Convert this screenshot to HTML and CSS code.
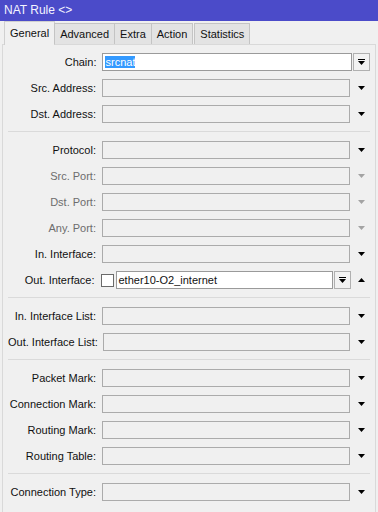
FILE: index.html
```
<html>
    <head>
        <link rel="stylesheet" href="styles.css">
    </head>
    <body>
        <div class="titlebar">NAT Rule &lt;&gt;</div>

        <div class="tabs">
            <span class="tab active">General</span>
            <span class="tab">Advanced</span>
            <span class="tab">Extra</span>
            <span class="tab">Action</span>
            <span class="tab">Statistics</span>
        </div>

        <div class="panel">
            <div class="group">
                <div class="row">
                    <span class="label">Chain:</span>
                    <div class="box white"><span class="sel">srcnat</span></div>
                    <span class="btn">
                        <svg width="7" height="6" viewBox="0 0 7 6"><rect x="0" y="0" width="7" height="1" fill="#000"/><path d="M0 2h7l-3.5 4z" fill="#000"/></svg>
                    </span>
                </div>
                <div class="row">
                    <span class="label">Src. Address:</span>
                    <div class="box"></div>
                    <span class="arrow"><svg width="7" height="4" viewBox="0 0 7 4"><path d="M0 0h7l-3.5 4z"/></svg></span>
                </div>
                <div class="row">
                    <span class="label">Dst. Address:</span>
                    <div class="box"></div>
                    <span class="arrow"><svg width="7" height="4" viewBox="0 0 7 4"><path d="M0 0h7l-3.5 4z"/></svg></span>
                </div>
            </div>

            <div class="group">
                <div class="row">
                    <span class="label">Protocol:</span>
                    <div class="box"></div>
                    <span class="arrow"><svg width="7" height="4" viewBox="0 0 7 4"><path d="M0 0h7l-3.5 4z"/></svg></span>
                </div>
                <div class="row off">
                    <span class="label">Src. Port:</span>
                    <div class="box"></div>
                    <span class="arrow"><svg width="7" height="4" viewBox="0 0 7 4"><path d="M0 0h7l-3.5 4z"/></svg></span>
                </div>
                <div class="row off">
                    <span class="label">Dst. Port:</span>
                    <div class="box"></div>
                    <span class="arrow"><svg width="7" height="4" viewBox="0 0 7 4"><path d="M0 0h7l-3.5 4z"/></svg></span>
                </div>
                <div class="row off">
                    <span class="label">Any. Port:</span>
                    <div class="box"></div>
                    <span class="arrow"><svg width="7" height="4" viewBox="0 0 7 4"><path d="M0 0h7l-3.5 4z"/></svg></span>
                </div>
                <div class="row">
                    <span class="label">In. Interface:</span>
                    <div class="box"></div>
                    <span class="arrow"><svg width="7" height="4" viewBox="0 0 7 4"><path d="M0 0h7l-3.5 4z"/></svg></span>
                </div>
                <div class="row">
                    <span class="label">Out. Interface:</span>
                    <div class="combo">
                        <span class="check"></span>
                        <div class="box white">ether10-O2_internet</div>
                        <span class="btn">
                            <svg width="7" height="6" viewBox="0 0 7 6"><rect x="0" y="0" width="7" height="1" fill="#000"/><path d="M0 2h7l-3.5 4z" fill="#000"/></svg>
                        </span>
                    </div>
                    <span class="arrow"><svg width="7" height="4" viewBox="0 0 7 4"><path d="M0 4h7l-3.5 -4z"/></svg></span>
                </div>
            </div>

            <div class="group">
                <div class="row">
                    <span class="label">In. Interface List:</span>
                    <div class="box"></div>
                    <span class="arrow"><svg width="7" height="4" viewBox="0 0 7 4"><path d="M0 0h7l-3.5 4z"/></svg></span>
                </div>
                <div class="row">
                    <span class="label">Out. Interface List:</span>
                    <div class="box"></div>
                    <span class="arrow"><svg width="7" height="4" viewBox="0 0 7 4"><path d="M0 0h7l-3.5 4z"/></svg></span>
                </div>
            </div>

            <div class="group">
                <div class="row">
                    <span class="label">Packet Mark:</span>
                    <div class="box"></div>
                    <span class="arrow"><svg width="7" height="4" viewBox="0 0 7 4"><path d="M0 0h7l-3.5 4z"/></svg></span>
                </div>
                <div class="row">
                    <span class="label">Connection Mark:</span>
                    <div class="box"></div>
                    <span class="arrow"><svg width="7" height="4" viewBox="0 0 7 4"><path d="M0 0h7l-3.5 4z"/></svg></span>
                </div>
                <div class="row">
                    <span class="label">Routing Mark:</span>
                    <div class="box"></div>
                    <span class="arrow"><svg width="7" height="4" viewBox="0 0 7 4"><path d="M0 0h7l-3.5 4z"/></svg></span>
                </div>
                <div class="row">
                    <span class="label">Routing Table:</span>
                    <div class="box"></div>
                    <span class="arrow"><svg width="7" height="4" viewBox="0 0 7 4"><path d="M0 0h7l-3.5 4z"/></svg></span>
                </div>
            </div>

            <div class="group">
                <div class="row">
                    <span class="label">Connection Type:</span>
                    <div class="box"></div>
                    <span class="arrow"><svg width="7" height="4" viewBox="0 0 7 4"><path d="M0 0h7l-3.5 4z"/></svg></span>
                </div>
            </div>
        </div>
    </body>
</html>
```

FILE: styles.css
```
body {
    margin: 0;
    width: 378px;
    height: 512px;
    overflow: hidden;
    background: #f0f0f0;
    font-family: "Liberation Sans", Arial, sans-serif;
    font-size: 11px;
    color: #111111;
}
.titlebar {
    height: 21px;
    line-height: 20px;
    padding: 0 0 0 4px;
    background: #4b4bc9;
    color: #f4f4ff;
    font-size: 12px;
}
.tabs {
    display: flex;
    align-items: flex-end;
    height: 23px;
    padding: 0 0 0 4px;
    position: relative;
    z-index: 1;
}
.tab {
    height: 20px;
    line-height: 20px;
    padding: 0 5px;
    margin: 0 0 0 -1px;
    background: #e3e3e3;
    border: 1px solid #c4c4c4;
    border-bottom: none;
}
.tab.active {
    height: 23px;
    line-height: 22px;
    margin: 0 0 -1px 0;
    background: #f0f0f0;
    border-color: #d0d0d0;
}
.tab:nth-child(5) {
    margin-left: 1px;
}
.panel {
    margin: 0 2px;
    padding: 8px 0 0 0;
    height: 480px;
    border: 1px solid #d9d9d9;
    border-bottom: none;
}
.group {
    display: flex;
    flex-direction: column;
    gap: 8px;
    margin: 0 5px 9px 5px;
    padding: 0 0 8px 0;
    border-bottom: 1px solid #dadada;
}
.group:last-child {
    border-bottom: none;
}
.row {
    display: flex;
    align-items: center;
    height: 18px;
}
.label {
    width: 89px;
    margin: 0 6px 0 0;
    text-align: right;
    white-space: nowrap;
}
.off .label {
    color: #6d6d6d;
}
.box {
    box-sizing: border-box;
    width: 251px;
    height: 18px;
    line-height: 16px;
    padding: 0 2px;
    border: 1px solid #ababab;
    background: #f0f0f0;
    white-space: nowrap;
}
.box.white {
    background: #ffffff;
    border-color: #9a9a9a;
}
.sel {
    background: #3399ff;
    color: #ffffff;
}
.btn {
    box-sizing: border-box;
    display: flex;
    align-items: center;
    justify-content: center;
    width: 17px;
    height: 18px;
    margin: 0 0 0 1px;
    border: 1px solid #b0b0b0;
    background: #f2f2f2;
}
.arrow {
    display: flex;
    justify-content: center;
    width: 18px;
    margin: 0 0 0 2px;
}
.arrow path {
    fill: #000000;
}
.off .arrow path {
    fill: #a3a3a3;
}
.combo {
    display: flex;
    align-items: center;
    width: 251px;
}
.combo .box {
    width: 217px;
    margin: 0 0 0 2px;
}
.check {
    box-sizing: border-box;
    width: 13px;
    height: 13px;
    border: 1px solid #6a6a6a;
    background: #ffffff;
}
```
